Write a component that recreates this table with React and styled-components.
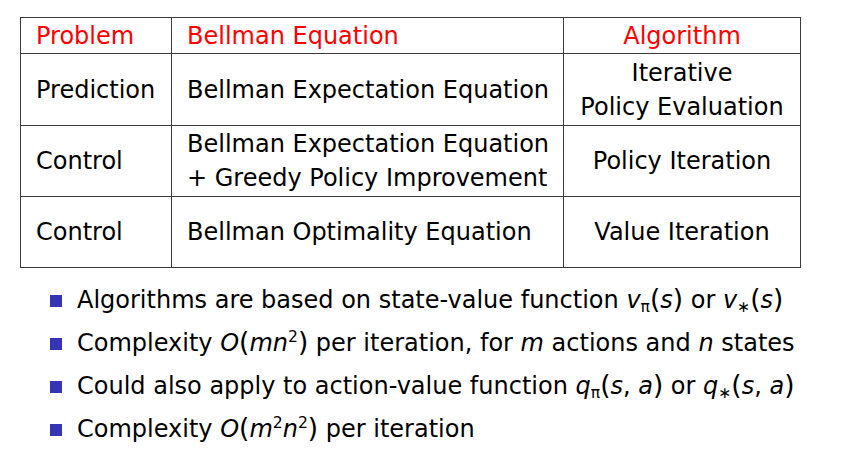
import React from "react";
import styled, { createGlobalStyle } from "styled-components";

const Global = createGlobalStyle`
  body {
    margin: 0;
    background: #ffffff;
    font-family: "DejaVu Sans", sans-serif;
  }
`;

const Page = styled.div`
  width: 844px;
  height: 466px;
  padding: 17px 0 0 20px;
  box-sizing: border-box;
  color: #000;
`;

const Table = styled.table`
  border-collapse: collapse;
  font-size: 24px;
  table-layout: fixed;
  width: 780px;
`;

const Col = styled.col`
  width: ${(p) => p.w}px;
`;

const Row = styled.tr`
  height: ${(p) => p.h}px;
`;

const Cell = styled.td`
  border: 1px solid #3a3a3a;
  padding: 0 8px 0 15px;
  text-align: ${(p) => (p.center ? "center" : "left")};
  color: ${(p) => (p.head ? "#ff0000" : "#000")};
  line-height: 34px;
  vertical-align: middle;
  white-space: nowrap;
  ${(p) => p.center && "padding: 0;"}
`;

const List = styled.ul`
  list-style: none;
  margin: 10px 0 0 30px;
  padding: 0;
  font-size: 24px;
`;

const Item = styled.li`
  display: flex;
  align-items: center;
  gap: 15px;
  height: 43px;
  white-space: nowrap;
`;

const Square = styled.span`
  width: 12px;
  height: 12px;
  background: #3535b5;
  flex: none;
  margin-top: 2px;
`;

const Var = styled.i`
  font-style: italic;
`;

const Paren = styled.span`
  font-size: 1.1em;
  line-height: 0;
`;

const Sub = styled.sub`
  font-size: 0.65em;
  vertical-align: -0.25em;
  line-height: 0;
`;

const Sup = styled.sup`
  font-size: 0.65em;
  vertical-align: 0.6em;
  line-height: 0;
`;

const widths = [151, 392, 237];

const rows = [
  { h: 72, cells: ["Prediction", "Bellman Expectation Equation", <>Iterative<br />Policy Evaluation</>] },
  { h: 71, cells: ["Control", <>Bellman Expectation Equation<br />+ Greedy Policy Improvement</>, "Policy Iteration"] },
  { h: 71, cells: ["Control", "Bellman Optimality Equation", "Value Iteration"] },
];

export default function App() {
  return (
    <>
      <Global />
      <Page>
        <Table>
          <colgroup>
            {widths.map((w, i) => (
              <Col key={i} w={w} />
            ))}
          </colgroup>
          <tbody>
            <Row h={36}>
              <Cell head>Problem</Cell>
              <Cell head>Bellman Equation</Cell>
              <Cell head center>Algorithm</Cell>
            </Row>
            {rows.map((r, i) => (
              <Row key={i} h={r.h}>
                <Cell>{r.cells[0]}</Cell>
                <Cell>{r.cells[1]}</Cell>
                <Cell center>{r.cells[2]}</Cell>
              </Row>
            ))}
          </tbody>
        </Table>
        <List>
          <Item>
            <Square />
            <span>
              Algorithms are based on state-value function <Var>v</Var><Sub>π</Sub><Paren>(</Paren><Var>s</Var><Paren>)</Paren> or <Var>v</Var><Sub>∗</Sub><Paren>(</Paren><Var>s</Var><Paren>)</Paren>
            </span>
          </Item>
          <Item>
            <Square />
            <span>
              Complexity <Var>O</Var><Paren>(</Paren><Var>mn</Var><Sup>2</Sup><Paren>)</Paren> per iteration, for <Var>m</Var> actions and <Var>n</Var> states
            </span>
          </Item>
          <Item>
            <Square />
            <span>
              Could also apply to action-value function <Var>q</Var><Sub>π</Sub><Paren>(</Paren><Var>s</Var>, <Var>a</Var><Paren>)</Paren> or <Var>q</Var><Sub>∗</Sub><Paren>(</Paren><Var>s</Var>, <Var>a</Var><Paren>)</Paren>
            </span>
          </Item>
          <Item>
            <Square />
            <span>
              Complexity <Var>O</Var><Paren>(</Paren><Var>m</Var><Sup>2</Sup><Var>n</Var><Sup>2</Sup><Paren>)</Paren> per iteration
            </span>
          </Item>
        </List>
      </Page>
    </>
  );
}
